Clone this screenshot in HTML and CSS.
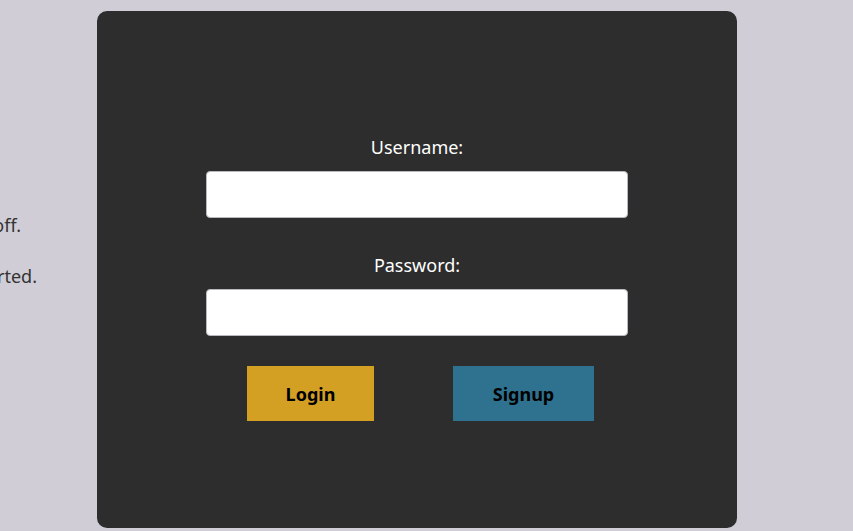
FILE: index.html
```html
<!DOCTYPE html>
<html>
<head>
<meta charset="utf-8">
<link rel="stylesheet" href="styles.css">
</head>
<body>
<div class="page">
  <aside class="side">
    <p class="line line-1">You have been logged off.</p>
    <p class="line">Please log in to get started.</p>
  </aside>
  <main class="card">
    <form class="form">
      <label class="label" for="u">Username:</label>
      <input class="field" id="u" type="text">
      <label class="label label-2" for="p">Password:</label>
      <input class="field" id="p" type="password">
      <div class="actions">
        <button type="button" class="btn btn-login">Login</button>
        <button type="button" class="btn btn-signup">Signup</button>
      </div>
    </form>
  </main>
</div>
</body>
</html>
```
FILE: styles.css
```css
html, body {
  margin: 0;
  height: 100%;
  overflow: hidden;
}
body {
  background: #d0cdd6;
  font-family: "Noto Sans", "Open Sans", sans-serif;
}
.page {
  display: flex;
  padding-top: 11px;
}
.side {
  flex: none;
  width: 260px;
  margin-left: -223px;
  margin-right: 60px;
  padding-top: 202px;
  color: #333;
  font-size: 18px;
  text-align: right;
}
.line {
  margin: 0 0 26px;
  line-height: 25px;
  white-space: nowrap;
}
.line-1 {
  margin-right: 16px;
}
.card {
  flex: none;
  width: 640px;
  height: 517px;
  background: #2d2d2d;
  border-radius: 10px;
  box-sizing: border-box;
  padding-top: 124px;
}
.form {
  display: flex;
  flex-direction: column;
  align-items: center;
}
.label {
  color: #fff;
  font-size: 18px;
  line-height: 24px;
  margin-bottom: 12px;
}
.label-2 {
  margin-top: 35px;
}
.field {
  width: 422px;
  height: 47px;
  box-sizing: border-box;
  border: 1px solid #b9b9c0;
  border-radius: 4px;
  background: #fff;
  margin: 0;
  padding: 0 8px;
}
.actions {
  display: flex;
  gap: 79px;
  margin-top: 30px;
  margin-left: 7px;
}
.btn {
  height: 55px;
  border: none;
  border-radius: 0;
  font-family: inherit;
  font-size: 18px;
  font-weight: bold;
  color: #000;
  padding: 0;
}
.btn-login {
  width: 127px;
  background: #d4a024;
}
.btn-signup {
  width: 141px;
  background: #2e728f;
}
```
